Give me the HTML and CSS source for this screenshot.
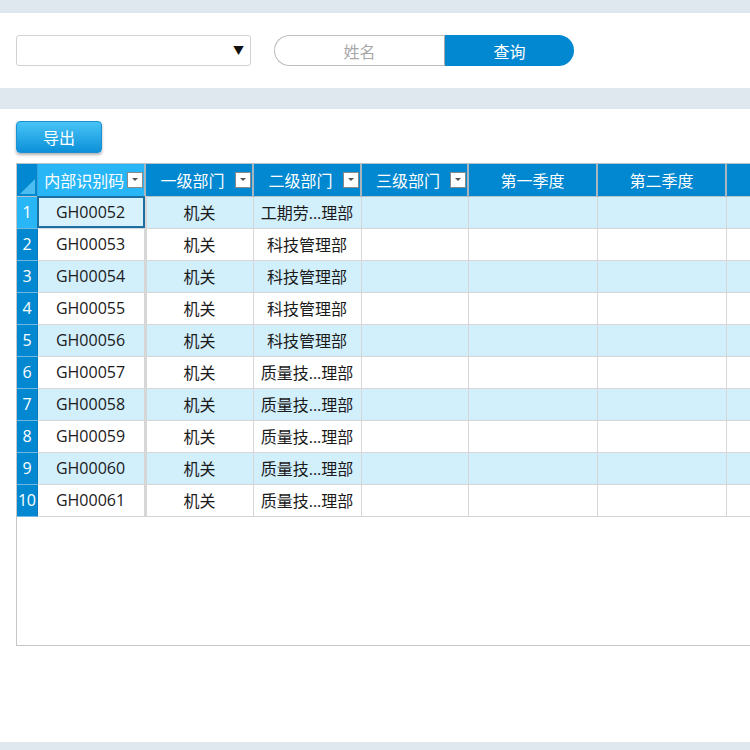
FILE: index.html
```html
<!DOCTYPE html>
<html lang="zh">
<head>
<meta charset="utf-8">
<link rel="stylesheet" href="styles.css">
</head>
<body>
<div class="band band-top"></div>
<div class="toolbar">
  <div class="select"><span class="caret">▼</span></div>
  <div class="search">
    <div class="search-input">姓名</div>
    <div class="search-btn">查询</div>
  </div>
</div>
<div class="band band-mid"></div>
<div class="content">
  <div class="actions"><button class="btn-export">导出</button></div>
  <div class="grid">
    <table>
      <colgroup>
        <col class="c-num"><col class="c-a"><col class="c-a"><col class="c-a"><col class="c-b"><col class="c-q"><col class="c-q"><col class="c-q">
      </colgroup>
      <thead>
        <tr>
          <th class="corner"><span class="tri"></span></th>
          <th class="sel-head"><div class="hd"><span class="t">内部识别码</span><span class="flt"></span></div></th>
          <th><div class="hd"><span class="t">一级部门</span><span class="flt"></span></div></th>
          <th><div class="hd"><span class="t">二级部门</span><span class="flt"></span></div></th>
          <th><div class="hd"><span class="t">三级部门</span><span class="flt"></span></div></th>
          <th>第一季度</th>
          <th>第二季度</th>
          <th></th>
        </tr>
      </thead>
      <tbody>
        <tr class="odd"><td class="num sel-num">1</td><td class="id sel-cell">GH00052</td><td>机关</td><td>工期劳...理部</td><td></td><td></td><td></td><td></td></tr>
        <tr><td class="num">2</td><td class="id">GH00053</td><td>机关</td><td>科技管理部</td><td></td><td></td><td></td><td></td></tr>
        <tr class="odd"><td class="num">3</td><td class="id">GH00054</td><td>机关</td><td>科技管理部</td><td></td><td></td><td></td><td></td></tr>
        <tr><td class="num">4</td><td class="id">GH00055</td><td>机关</td><td>科技管理部</td><td></td><td></td><td></td><td></td></tr>
        <tr class="odd"><td class="num">5</td><td class="id">GH00056</td><td>机关</td><td>科技管理部</td><td></td><td></td><td></td><td></td></tr>
        <tr><td class="num">6</td><td class="id">GH00057</td><td>机关</td><td>质量技...理部</td><td></td><td></td><td></td><td></td></tr>
        <tr class="odd"><td class="num">7</td><td class="id">GH00058</td><td>机关</td><td>质量技...理部</td><td></td><td></td><td></td><td></td></tr>
        <tr><td class="num">8</td><td class="id">GH00059</td><td>机关</td><td>质量技...理部</td><td></td><td></td><td></td><td></td></tr>
        <tr class="odd"><td class="num">9</td><td class="id">GH00060</td><td>机关</td><td>质量技...理部</td><td></td><td></td><td></td><td></td></tr>
        <tr><td class="num">10</td><td class="id">GH00061</td><td>机关</td><td>质量技...理部</td><td></td><td></td><td></td><td></td></tr>
      </tbody>
    </table>
  </div>
</div>
<div class="band band-bottom"></div>
</body>
</html>
```
FILE: styles.css
```css
* { box-sizing: border-box; }
html, body { margin: 0; padding: 0; }
body {
  width: 750px;
  height: 750px;
  overflow: hidden;
  background: #fff;
  font-family: "Open Sans", "Noto Sans CJK SC", sans-serif;
  font-size: 16px;
  color: #1a1a1a;
  display: flex;
  flex-direction: column;
}
.band { background: #dfe7ef; flex: none; }
.band-top { height: 13px; }
.band-mid { height: 21px; }
.band-bottom { height: 8px; }

.toolbar {
  height: 75px;
  flex: none;
  display: flex;
  align-items: flex-start;
  padding: 22px 0 0 16px;
  gap: 23px;
}
.select {
  width: 235px;
  height: 31px;
  border: 1px solid #d2d2d2;
  border-radius: 3px;
  display: flex;
  align-items: center;
  justify-content: flex-end;
  padding-right: 6px;
}
.caret { font-size: 11px; color: #111; line-height: 1; }
.search { display: flex; height: 31px; }
.search-input {
  width: 171px;
  border: 1px solid #bdbdbd;
  border-right: 1px solid #aaa;
  border-radius: 16px 0 0 16px;
  color: #a8a8a8;
  display: flex;
  align-items: center;
  justify-content: center;
  padding-left: 0;
}
.search-btn {
  width: 129px;
  background: #0288d1;
  color: #fff;
  border-radius: 0 16px 16px 0;
  display: flex;
  align-items: center;
  justify-content: center;
}

.content {
  flex: 1;
  padding: 12px 0 0 16px;
  display: flex;
  flex-direction: column;
  gap: 10px;
}
.btn-export {
  width: 86px;
  height: 32px;
  border: 1px solid #1b91d4;
  border-radius: 4px;
  background: linear-gradient(#47c4f7, #0d90d8);
  color: #fff;
  font: inherit;
  font-size: 16px;
  box-shadow: 0 2px 3px rgba(0,0,0,0.3);
  padding: 0;
}
.grid {
  height: 483px;
  width: 760px;
  border-left: 1px solid #c6c6c6;
  border-bottom: 1px solid #c6c6c6;
  border-top: 1px solid #b9c3ca;
  overflow: hidden;
}
table {
  border-collapse: collapse;
  table-layout: fixed;
  width: 838px;
}
.c-num { width: 20px; }
.c-a { width: 108px; }
.c-b { width: 107px; }
.c-q { width: 129px; }

th {
  height: 32px;
  background: #0288d1;
  color: #fff;
  font-weight: normal;
  border-right: 2px solid #a9b6bf;
  border-bottom: 1px solid #b7c2c9;
  padding: 0;
  white-space: nowrap;
  overflow: hidden;
}
th.sel-head { background: #29b6f6; }
th.corner { position: relative; border-right: 1px solid #3aa3dc; }
.tri {
  position: absolute;
  right: 2px;
  bottom: 2px;
  width: 0;
  height: 0;
  border-left: 15px solid transparent;
  border-bottom: 15px solid #4cbdf0;
}
.hd {
  display: flex;
  align-items: center;
  padding: 0 1px 0 4px;
}
.hd .t { flex: 1; text-align: center; overflow: hidden; }
.flt {
  flex: none;
  width: 16px;
  height: 16px;
  background: #fff;
  border: 1px solid #8a8a8a;
  display: flex;
  align-items: center;
  justify-content: center;
}
.flt::after {
  content: "";
  width: 0;
  height: 0;
  border-left: 3px solid transparent;
  border-right: 3px solid transparent;
  border-top: 3px solid #555;
}

td {
  height: 32px;
  padding: 0;
  text-align: center;
  border-right: 1px solid #d6d6d6;
  border-bottom: 1px solid #d6d6d6;
  white-space: nowrap;
  overflow: hidden;
}
tr.odd td { background: #d2effc; }
td.num {
  background: #0288d1 !important;
  color: #fff;
  border-right: 1px solid #0b79b8;
  border-bottom: 1px solid #6fb9e2;
  text-align: center;
  padding: 0;
  letter-spacing: -0.5px;
}
td.num.sel-num { background: #29b6f6 !important; }
td.id { border-right: 3px solid #d6d6d6; }
td.sel-cell {
  background: #d8f2fd !important;
  outline: 2px solid #1d6fa3;
  outline-offset: -2px;
}
```
